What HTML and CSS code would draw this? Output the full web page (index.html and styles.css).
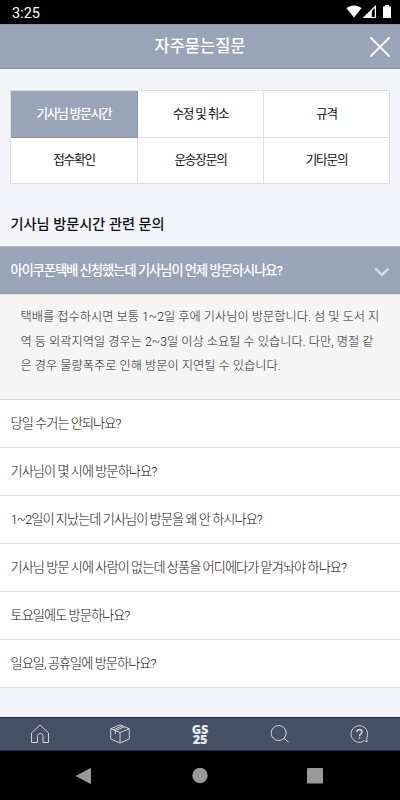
FILE: index.html
```html
<!DOCTYPE html>
<html lang="ko">
<head>
    <meta charset="UTF-8">
    <meta name="viewport" content="width=device-width, initial-scale=1.0">
    <title>자주묻는질문</title>
    <link rel="stylesheet" href="styles.css">
</head>
<body>
    <div class="status">
        <span>3:25</span>
        <svg width="46" height="14" viewBox="0 0 46 14" fill="#fff">
            <path d="M0.5 3.2C4.8-.3 11.2-.3 15.5 3.2L8 12.4z"/>
            <path fill-rule="evenodd" d="M16.500 13L30 0v13zM25.800 12h3V3l-3 3z"/>
            <path d="M37 1.500h2V0h4v1.500h2V13h-8z"/>
        </svg>
    </div>

    <header class="header">
        <h1>자주묻는질문</h1>
        <svg class="close" width="20" height="20" viewBox="0 0 20 20">
            <path d="M1 1L19 19M19 1L1 19"/>
        </svg>
    </header>

    <main class="content">
        <div class="tabs">
            <a class="tab active">기사님 방문시간</a>
            <a class="tab">수정 및 취소</a>
            <a class="tab">규격</a>
            <a class="tab">접수확인</a>
            <a class="tab">운송장문의</a>
            <a class="tab">기타문의</a>
        </div>

        <h2>기사님 방문시간 관련 문의</h2>

        <div class="question open">
            <span>아이쿠폰택배 신청했는데 기사님이 언제 방문하시나요?</span>
            <svg width="16" height="10" viewBox="0 0 16 10">
                <path d="M1.500 1.500L8 8L14.500 1.500"/>
            </svg>
        </div>
        <p class="answer">택배를 접수하시면 보통 1~2일 후에 기사님이 방문합니다. 섬 및 도서 지<br>역 등 외곽지역일 경우는 2~3일 이상 소요될 수 있습니다. 다만, 명절 같<br>은 경우 물량폭주로 인해 방문이 지연될 수 있습니다.</p>
        <div class="question">당일 수거는 안되나요?</div>
        <div class="question">기사님이 몇 시에 방문하나요?</div>
        <div class="question">1~2일이 지났는데 기사님이 방문을 왜 안 하시나요?</div>
        <div class="question">기사님 방문 시에 사람이 없는데 상품을 어디에다가 맡겨놔야 하나요?</div>
        <div class="question">토요일에도 방문하나요?</div>
        <div class="question">일요일, 공휴일에 방문하나요?</div>
    </main>

    <nav class="menu">
        <a>
            <svg width="20" height="20" viewBox="0 0 20 20">
                <path d="M1.500 9L10 1L18.500 9V18.500H13V12.500C13 8.500 7.500 8.500 7.500 12.500V18.500H1.500z"/>
            </svg>
        </a>
        <a>
            <svg width="20" height="20" viewBox="0 0 20 20">
                <path d="M10 .8L19.300 4.800V15L10 19L.7 15V4.800zM.7 4.800L10 8.500L19.300 4.800M10 8.500V19M5.300 10V6.600L14.500 2.800M3.500 5.800L12.300 1.900"/>
            </svg>
        </a>
        <a class="gs"><span>GS<br>25</span></a>
        <a>
            <svg width="20" height="20" viewBox="0 0 20 20">
                <circle cx="8.700" cy="9" r="7.500"/>
                <path d="M14 14.300L18.500 18"/>
            </svg>
        </a>
        <a>
            <svg width="20" height="20" viewBox="0 0 20 20">
                <path d="M14.500 16.500A8.300 8.300 0 1 1 17 13.200Q16.200 15.200 17.300 17.500Q16 17.800 14.500 16.500"/>
                <path class="mark" d="M7 8C7 4.800 12 4.800 12 8C12 9.900 9.500 9.900 9.500 12.200M9.500 13.300V14.800"/>
            </svg>
        </a>
    </nav>

    <div class="android">
        <svg width="400" height="49" viewBox="0 0 400 49" fill="#999">
            <path d="M90.500 17.500V32.500L76.500 25z" stroke="#999" stroke-linejoin="round"/>
            <circle cx="200" cy="24.500" r="7.700"/>
            <rect x="307" y="17" width="16" height="15.500" rx="1"/>
        </svg>
    </div>
</body>
</html>
```
FILE: styles.css
```css
*{
    box-sizing: border-box;
}
body{
    margin: 0;
    width: 400px;
    height: 800px;
    display: flex;
    flex-direction: column;
    overflow: hidden;
    background-color: #f3f4fa;
    color: #111;
    font-family: Roboto, "Noto Sans CJK KR", sans-serif;
}
.status{
    height: 24px;
    padding: 0 8px 0 12px;
    display: flex;
    align-items: center;
    justify-content: space-between;
    background-color: #000;
    color: #fff;
    font-size: 14.5px;
}
.status span{
    padding-top: 2px;
}
.header{
    height: 45px;
    display: grid;
    grid-template-columns: 50px 1fr 50px;
    align-items: center;
    justify-items: center;
    background-color: #9aa4b8;
    border-top: 1px solid #8d98b0;
    border-bottom: 1px solid #8593af;
}
h1{
    grid-column: 2;
    margin: 0;
    color: #fff;
    font-size: 16.5px;
    font-weight: 500;
    line-height: 24px;
}
.close{
    margin-left: 10px;
    fill: none;
    stroke: #fff;
    stroke-width: 1.8;
    stroke-linecap: round;
}
.content{
    flex: 1;
}
.tabs{
    display: grid;
    grid-template-columns: 127px 126px 126px;
    margin: 21px 10px 0;
    border-top: 1px solid #dcdde0;
    border-left: 1px solid #dcdde0;
}
.tab{
    height: 46.5px;
    padding-bottom: 3px;
    display: flex;
    align-items: center;
    justify-content: center;
    background-color: #fff;
    border-right: 1px solid #dcdde0;
    border-bottom: 1px solid #dcdde0;
    font-size: 12.6px;
    font-weight: 400;
    letter-spacing: -1.15px;
}
.tab.active{
    background-color: #9aa4b8;
    border-color: #8593af;
    color: #fff;
    font-weight: 500;
}
h2{
    margin: 0;
    padding: 28px 10px 10px 10.5px;
    height: 62px;
    font-size: 14.2px;
    font-weight: 500;
    line-height: 24px;
}
.question{
    height: 48px;
    padding: 0 10px 3px 10.5px;
    display: flex;
    align-items: center;
    background-color: #fff;
    border-bottom: 1px solid #dcdcdc;
    font-size: 13.2px;
    font-weight: 300;
    letter-spacing: -0.97px;
}
.question.open{
    height: 49px;
    justify-content: space-between;
    background-color: #9aa4b8;
    border-top: 1px solid #b8bcc6;
    color: #fff;
    font-weight: 500;
}
.question svg{
    margin-top: 6px;
    fill: none;
    stroke: #d9d9d9;
    stroke-width: 2.5;
}
.answer{
    margin: 0;
    height: 105px;
    padding: 10px 20px 0 20.5px;
    background-color: #f5f5f5;
    border-bottom: 1px solid #dcdcdc;
    color: #222;
    font-size: 12.2px;
    font-weight: 300;
    line-height: 24.5px;
    letter-spacing: 0.04px;
    white-space: nowrap;
}
.menu{
    height: 34px;
    display: flex;
    background-color: #465067;
    border-top: 1px solid #1b2a47;
    border-bottom: 1px solid #1b2a47;
}
.menu a{
    flex: 1;
    display: flex;
    align-items: center;
    justify-content: center;
}
.menu svg{
    fill: none;
    stroke: #d0d3da;
    stroke-width: 1;
    stroke-linejoin: round;
}
.menu .mark{
    stroke-width: 1.5;
}
.menu .gs{
    color: #e8eaee;
    font-family: "Open Sans", sans-serif;
    font-size: 12.8px;
    font-weight: 800;
    line-height: 10px;
    letter-spacing: -0.3px;
    text-align: center;
}
.android{
    height: 49px;
    background-color: #000;
}
```
